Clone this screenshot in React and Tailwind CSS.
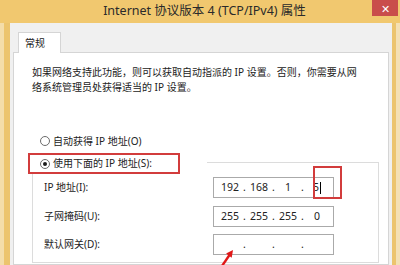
import React from "react";

const font = { fontFamily: '"Noto Sans", "Noto Sans CJK SC", sans-serif' };

function Radio({ checked }) {
  return (
    <span className="w-[10px] h-[10px] rounded-full border border-[#6b6b6b] bg-white flex items-center justify-center shrink-0">
      {checked && <span className="w-[4px] h-[4px] rounded-full bg-[#1a1a1a]" />}
    </span>
  );
}

function IpInput({ parts, marked }) {
  return (
    <div className="relative w-[121px] h-[21px] border border-[#aaaaaa] bg-white flex items-center pl-[4px] text-[10.5px] text-[#222]">
      {parts.map((p, i) => (
        <React.Fragment key={i}>
          <span className="w-[24px] text-center">
            {p}
            {marked && i === 3 && (
              <span className="inline-block w-px h-[12px] bg-black align-middle ml-[1px]" />
            )}
          </span>
          {i < 3 && <span className="w-[5px] text-center">.</span>}
        </React.Fragment>
      ))}
      {marked && (
        <div className="absolute left-[99px] top-[-12px] w-[29px] h-[33px] border-2 border-[#d23c3c]" />
      )}
    </div>
  );
}

export default function App() {
  return (
    <div className="relative w-[400px] h-[265px] overflow-hidden bg-[#f1c86f] flex flex-col text-[#222]" style={font}>
      {/* title bar */}
      <div className="h-[23px] flex shrink-0">
        <div className="flex-1 flex items-center justify-center pl-[37px] text-[12.5px] text-[#2a2a2a]">
          Internet 协议版本 4 (TCP/IPv4) 属性
        </div>
        <div className="w-[26px] h-[16px] mr-[2px] bg-[#c94d4b] flex items-center justify-center text-white text-[11px] leading-none">
          ✕
        </div>
      </div>
      {/* body */}
      <div className="flex-1 flex min-h-0">
        <div className="w-[4px] bg-[#f4ddaa]" />
        <div className="w-[6px] bg-[#ecc46e]" />
        <div className="flex-1 bg-[#f0f0f0] pl-[3px] pr-[3px] pt-[9px] flex flex-col">
          <div className="relative z-10 ml-[5px] w-[43px] h-[21px] -mb-px border border-b-0 border-[#d5d5d5] bg-white flex items-center pl-[6px] text-[10px]">
            常规
          </div>
          <div className="flex-1 border border-[#d5d5d5] bg-white pl-[18px] pt-[12px]">
            <p className="text-[10px] leading-[15px] whitespace-nowrap">
              如果网络支持此功能，则可以获取自动指派的 IP 设置。否则，你需要从网
              <br />
              络系统管理员处获得适当的 IP 设置。
            </p>
            <div className="mt-[38px] h-[16px] flex items-center pl-[8px] text-[10px]">
              <Radio />
              <span className="ml-[3px]">自动获得 IP 地址(O)</span>
            </div>
            <div className="mt-[4px] w-[347px] flex flex-col">
              <div className="flex h-[21px]">
                <div className="-ml-[4px] w-[152px] h-[21px] border-2 border-[#d23c3c] flex items-center pl-[10px] text-[10px] shrink-0">
                  <Radio checked />
                  <span className="ml-[3px]">使用下面的 IP 地址(S):</span>
                </div>
                <div className="flex-1 ml-[27px] mt-[9px] border-t border-r border-[#dcdcdc]" />
              </div>
              <div className="border-l border-r border-b border-[#dcdcdc] pt-[3px] pb-[7px] pl-[11px] flex flex-col text-[10px]">
                <div className="h-[21px] flex items-center">
                  <span className="w-[169px]">IP 地址(I):</span>
                  <IpInput parts={["192", "168", "1", "5"]} marked />
                </div>
                <div className="mt-[8px] h-[21px] flex items-center">
                  <span className="w-[169px]">子网掩码(U):</span>
                  <IpInput parts={["255", "255", "255", "0"]} />
                </div>
                <div className="mt-[7px] h-[21px] flex items-center">
                  <span className="w-[169px]">默认网关(D):</span>
                  <IpInput parts={["", "", "", ""]} />
                </div>
              </div>
            </div>
          </div>
        </div>
        <div className="w-[4px] bg-[#ecc46e]" />
        <div className="w-[4px] bg-[#f4e0b4]" />
      </div>
      {/* annotation arrow */}
      <svg className="absolute left-[215px] top-[244px]" width="25" height="21" viewBox="0 0 25 21">
        <line x1="7" y1="22" x2="14.5" y2="11" stroke="#e01818" strokeWidth="2.4" />
        <polygon points="18,6 16.7,13.8 11.1,9.6" fill="#e01818" />
      </svg>
    </div>
  );
}
